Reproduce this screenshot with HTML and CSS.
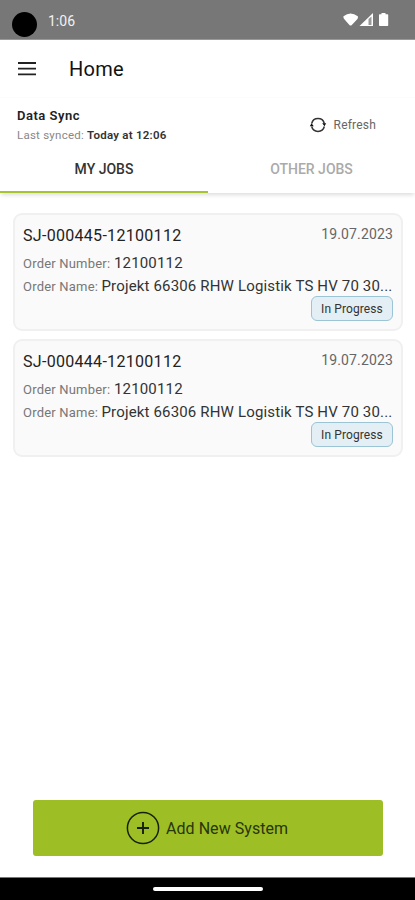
FILE: index.html
```html
<!DOCTYPE html>
<html lang="en">
<head>
<meta charset="utf-8">
<title>Home</title>
<link rel="stylesheet" href="styles.css">
</head>
<body>
<div class="app">
  <div class="status">
    <span class="camera"></span>
    <span class="clock">1:06</span>
    <svg class="status-icons" width="47" height="16" viewBox="0 0 47 16">
      <path d="M.5 4.2Q7.500-1.200 14.800 4.200Q15.400 6 14 7.400L8.800 13Q7.600 14 6.400 13L1.600 7.600Q0 5.800.5 4.200Z" fill="#fff"/>
      <path d="M16.500 14L30 1V14Z" fill="#fff"/>
      <path d="M25.500 7L28.500 4.500V13H25.500Z" fill="#999"/>
      <path d="M38.500 1H42.500V2.200H44.500Q45.200 2.200 45.200 3V13.200Q45.200 14 44.500 14H36.800Q36 14 36 13.200V3Q36 2.200 36.800 2.200H38.500Z" fill="#fff"/>
    </svg>
  </div>
  <header class="bar">
    <svg class="menu" width="18" height="14" viewBox="0 0 18 14"><path d="M0 1H18M0 6.700H18M0 12.400H18" stroke="#222" stroke-width="1.800"/></svg>
    <h1>Home</h1>
  </header>
  <section class="sync">
    <div>
      <div class="sync-title">Data Sync</div>
      <div class="sync-time">Last synced: <b>Today at 12:06</b></div>
    </div>
    <div class="refresh">
      <svg width="18" height="16" viewBox="0 0 18 16">
        <g fill="none" stroke="#333" stroke-width="1.500"><path d="M2.700 6.500A6.500 6.500 0 0 1 15.300 6.500"/><path d="M15.300 9.500A6.500 6.500 0 0 1 2.700 9.500"/></g>
        <path d="M13.200 6.300H17.200L15.500 9.200ZM.8 9.300H4.800L2.500 6.300Z" fill="#111"/>
      </svg>
      <span>Refresh</span>
    </div>
  </section>
  <nav class="tabs">
    <div class="tab active"><span>MY JOBS</span></div>
    <div class="tab"><span>OTHER JOBS</span></div>
  </nav>
  <main class="jobs">
    <article class="card">
      <div class="top"><span class="id">SJ-000445-12100112</span><span class="date">19.07.2023</span></div>
      <div class="row"><span class="label">Order Number:</span><span class="num">12100112</span></div>
      <div class="row"><span class="label name">Order Name:</span><span class="value">Projekt 66306 RHW Logistik TS HV 70 30...</span></div>
      <div class="tag"><span>In Progress</span></div>
    </article>
    <article class="card">
      <div class="top"><span class="id">SJ-000444-12100112</span><span class="date">19.07.2023</span></div>
      <div class="row"><span class="label">Order Number:</span><span class="num">12100112</span></div>
      <div class="row"><span class="label name">Order Name:</span><span class="value">Projekt 66306 RHW Logistik TS HV 70 30...</span></div>
      <div class="tag"><span>In Progress</span></div>
    </article>
  </main>
  <div class="add">
    <svg width="34" height="34" viewBox="0 0 34 34" fill="none" stroke="#17200a"><circle cx="17" cy="17" r="15.600" stroke-width="1.500"/><path d="M11 17H23M17 11V23" stroke-width="1.900"/></svg>
    <span>Add New System</span>
  </div>
  <div class="gesture"><span></span></div>
</div>
</body>
</html>
```
FILE: styles.css
```css
* { box-sizing: border-box; }
body { margin: 0; font-family: Roboto, sans-serif; background: #fff; color: #222; }
.app { width: 415px; height: 900px; display: flex; flex-direction: column; white-space: nowrap; overflow: hidden; }
svg { display: block; flex: none; }
.status { height: 40px; background: #777; border-bottom: 1px solid #999; display: flex; align-items: flex-start; padding: 12px 25px 0 12px; }
.camera { width: 25px; height: 25px; border-radius: 50%; background: #000; }
.clock { color: #f2f2f2; font-size: 14px; line-height: 18px; margin-left: 11px; }
.status-icons { margin-left: auto; }
.bar { height: 58px; display: flex; align-items: center; padding-left: 18px; border-bottom: 1px solid #fcfcfc; }
h1 { margin: 0 0 0 33px; font-size: 20px; line-height: 24px; font-weight: 400; letter-spacing: .25px; color: #111; }
.sync { height: 50px; display: flex; justify-content: space-between; padding: 10px 39px 0 17px; }
.sync-title { font-size: 13px; line-height: 16px; font-weight: 600; letter-spacing: .5px; }
.sync-time { font-size: 11.500px; line-height: 15px; margin-top: 4px; color: #888; letter-spacing: .24px; }
.sync-time b { font-weight: 600; color: #333; }
.refresh { display: flex; align-items: center; gap: 7px; height: 34px; font-size: 12px; color: #666; letter-spacing: .2px; }
.tabs { height: 45px; display: flex; box-shadow: 0 3px 4px -1px #ddd; clip-path: inset(0 0 -8px 0); }
.tab { width: 207px; height: 45px; padding-top: 13px; text-align: center; font-size: 14px; line-height: 16px; color: #aaa; font-weight: 500; }
.active { width: 208px; color: #333; border-bottom: 2px solid #a6c331; }
.jobs { flex: 1; padding: 20px 12px 0 13px; display: flex; flex-direction: column; gap: 8px; }
.card { height: 118px; border: 2px solid #f0f0f0; border-radius: 9px; background: #fafafa; padding: 10px 8px 0 8px; }
.top { display: flex; justify-content: space-between; height: 27px; }
.id { font-size: 16px; line-height: 22px; letter-spacing: .3px; }
.date { font-size: 14px; line-height: 18px; color: #666; letter-spacing: .15px; }
.row { display: flex; align-items: baseline; height: 23px; line-height: 22px; }
.label { width: 91px; font-size: 13px; color: #777; letter-spacing: .2px; }
.name { width: 78.500px; }
.num, .value { font-size: 15px; letter-spacing: .16px; color: #333; }
.tag { display: flex; justify-content: flex-end; margin-top: -2px; }
.tag span { width: 82px; height: 25px; border: 1.500px solid #9bc4d5; border-radius: 6px; background: #e3eff4; text-align: center; font-size: 12px; line-height: 24px; letter-spacing: .1px; color: #333; }
.add { height: 56px; width: 350px; margin: 0 0 21px 33px; border-radius: 3px; background: #9dbf25; display: flex; align-items: center; padding-left: 93px; gap: 6px; font-size: 16px; letter-spacing: .05px; color: #28360b; }
.gesture { height: 23px; background: #000; border-top: 1px solid #777; display: flex; justify-content: center; padding-top: 9px; }
.gesture span { width: 110px; height: 4px; border-radius: 2px; background: #fff; }
```
